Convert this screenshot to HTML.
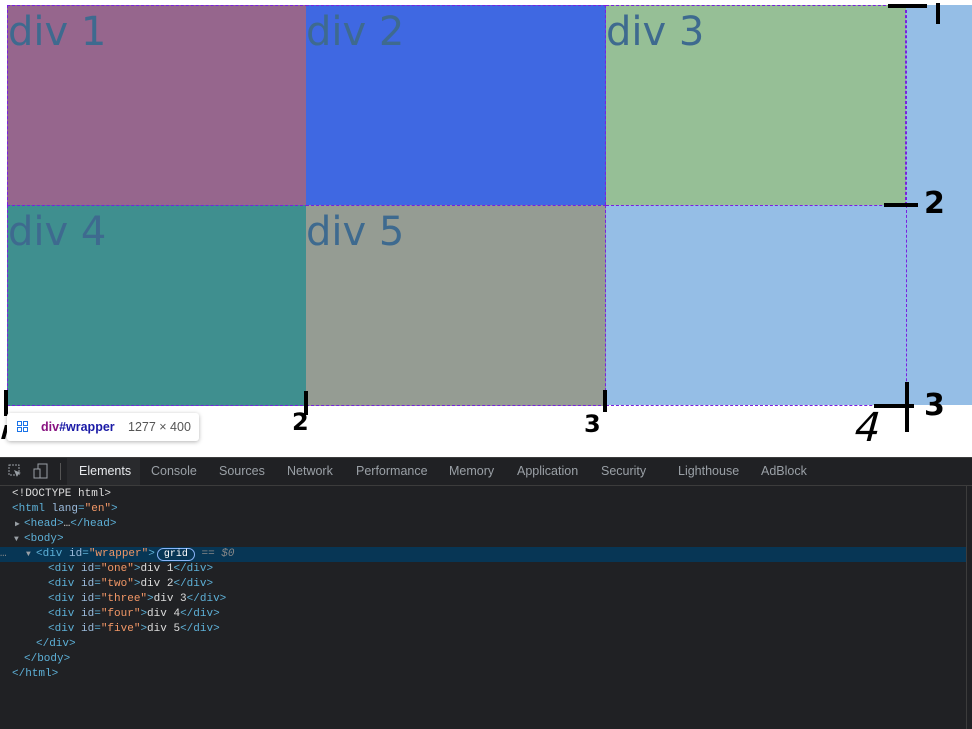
<!DOCTYPE html>
<html><head><style>
body{margin:0;width:972px;height:729px;overflow:hidden;background:#fff;position:relative;font-family:"Liberation Sans",sans-serif}
.wrap{position:absolute;left:7px;top:5px;width:965px;height:400px;background:#95bee6}
.c{position:absolute;width:299px;height:199px;font-family:"DejaVu Sans","Liberation Sans",sans-serif;font-size:40px;color:#3e6a8f;line-height:52px;border-style:dashed;border-color:#7a1fe0;border-width:1px 1px 0 0}
.m{position:absolute;background:#000}
.h{position:absolute;font:bold 30px "DejaVu Sans",sans-serif;color:#000}
.dt{position:absolute;left:0;top:457px;width:972px;height:272px;background:#202124}
.tabs{height:27px;border-bottom:1px solid #3c3c3c;border-top:1px solid #3c3c3c;position:relative;font-size:12.5px;color:#9aa0a6}
.tabs span{position:absolute;top:6px}
.code{font:11px/15px "Liberation Mono",monospace;color:#ddd;position:absolute;top:30px;left:0;width:966px}
.code div{height:15px;white-space:pre;position:relative}
.code div b{position:absolute;top:0;font-weight:normal}
.t{color:#5db0d7}.a{color:#9bbbdc}.v{color:#f29766}.w{color:#ddd}
.ar{color:#9aa0a6;font-size:8px}
</style></head><body>
<div class="wrap"></div>
<div class="c" style="left:7px;top:5px;background:#96668d;border-left:1px dashed #7a1fe0;border-top:1px dashed #7a1fe0">div 1</div>
<div class="c" style="left:306px;top:5px;background:#3f68e2;border-top:1px dashed #7a1fe0">div 2</div>
<div class="c" style="left:606px;top:5px;background:#96bf96;border-top:1px dashed #7a1fe0">div 3</div>
<div class="c" style="left:7px;top:205px;background:#3f8f8f;border-left:1px dashed #7a1fe0;border-bottom:1px dashed #7a1fe0">div 4</div>
<div class="c" style="left:306px;top:205px;background:#959c93;border-bottom:1px dashed #7a1fe0">div 5</div>
<div style="position:absolute;left:606px;top:205px;width:300px;height:199px;border-right:1px dashed #7a1fe0;border-bottom:1px dashed #7a1fe0;border-top:1px dashed #7a1fe0"></div>
<div style="position:absolute;left:906px;top:5px;height:200px;border-right:1px dashed #7a1fe0"></div>
<div class="m" style="left:888px;top:4px;width:39px;height:4px"></div>
<div class="m" style="left:936px;top:3px;width:4px;height:21px"></div>
<div class="m" style="left:884px;top:203px;width:34px;height:4px"></div>
<div class="h" style="left:924px;top:186px">2</div>
<div class="m" style="left:905px;top:382px;width:4px;height:50px"></div>
<div class="m" style="left:874px;top:404px;width:40px;height:4px"></div>
<div class="h" style="left:924px;top:388px">3</div>
<div style="position:absolute;left:855px;top:405px;font:40px 'DejaVu Sans',sans-serif;transform:skewX(-15deg)">4</div>
<div class="m" style="left:4px;top:390px;width:4px;height:26px"></div>
<div class="m" style="left:304px;top:391px;width:4px;height:24px"></div>
<div class="h" style="left:292px;top:408px;font-size:24px">2</div>
<div class="m" style="left:603px;top:390px;width:4px;height:22px"></div>
<div class="h" style="left:584px;top:410px;font-size:24px">3</div>
<div class="m" style="left:3px;top:425px;width:4px;height:14px;transform:skewX(-15deg)"></div>
<div style="position:absolute;left:7px;top:413px;width:192px;height:28px;background:#fff;border-radius:3px;box-shadow:0 1px 4px rgba(0,0,0,.3);font-size:12.5px;line-height:28px">
<svg style="position:absolute;left:10px;top:8px" width="11" height="11"><rect x="0.5" y="0.5" width="4" height="4" fill="none" stroke="#1a73e8"/><rect x="6.5" y="0.5" width="4" height="4" fill="none" stroke="#1a73e8"/><rect x="0.5" y="6.5" width="4" height="4" fill="none" stroke="#1a73e8"/><rect x="6.5" y="6.5" width="4" height="4" fill="none" stroke="#1a73e8"/></svg>
<span style="position:absolute;left:34px;font-weight:bold"><span style="color:#881280">div</span><span style="color:#1a1aa6">#wrapper</span></span>
<span style="position:absolute;left:121px;color:#555">1277 × 400</span></div>
<div class="dt">
<div class="tabs">
<svg style="position:absolute;left:8px;top:6px" width="14" height="14"><rect x="1" y="1" width="10" height="10" fill="none" stroke="#9aa0a6" stroke-dasharray="2 1"/><path d="M6 6l7 3-3 1-1 3z" fill="#9aa0a6"/></svg>
<svg style="position:absolute;left:33px;top:5px" width="16" height="16"><rect x="5" y="1" width="9" height="14" fill="none" stroke="#9aa0a6"/><rect x="1" y="6" width="6" height="9" fill="#202124" stroke="#9aa0a6"/></svg>
<div style="position:absolute;left:60px;top:5px;width:1px;height:17px;background:#555"></div>
<div style="position:absolute;left:67px;top:0;width:73px;height:27px;background:#292a2d"></div>
<span style="left:79px;color:#e8eaed">Elements</span><span style="left:151px">Console</span><span style="left:219px">Sources</span><span style="left:287px">Network</span><span style="left:356px">Performance</span><span style="left:449px">Memory</span><span style="left:517px">Application</span><span style="left:601px">Security</span><span style="left:678px">Lighthouse</span><span style="left:761px">AdBlock</span>
</div>
<div class="code">
<div><b class="w" style="left:12px">&lt;!DOCTYPE html&gt;</b></div>
<div><b class="t" style="left:12px">&lt;html <span class="a">lang</span>=<span class="v">"en"</span>&gt;</b></div>
<div><b class="ar" style="left:15px">▶</b><b class="t" style="left:24px">&lt;head&gt;<span class="w">…</span>&lt;/head&gt;</b></div>
<div><b class="ar" style="left:14px">▼</b><b class="t" style="left:24px">&lt;body&gt;</b></div>
<div style="background:#073655"><b style="left:0;color:#888">…</b><b class="ar" style="left:26px">▼</b><b class="t" style="left:36px">&lt;div <span class="a">id</span>=<span class="v">"wrapper"</span>&gt;<span style="border:1px solid #8ab4f8;border-radius:8px;padding:0 6px;color:#fff;font-size:10px;margin-left:2px">grid</span> <span style="color:#888">== <i>$0</i></span></b></div>
<div><b class="t" style="left:48px">&lt;div <span class="a">id</span>=<span class="v">"one"</span>&gt;<span class="w">div 1</span>&lt;/div&gt;</b></div>
<div><b class="t" style="left:48px">&lt;div <span class="a">id</span>=<span class="v">"two"</span>&gt;<span class="w">div 2</span>&lt;/div&gt;</b></div>
<div><b class="t" style="left:48px">&lt;div <span class="a">id</span>=<span class="v">"three"</span>&gt;<span class="w">div 3</span>&lt;/div&gt;</b></div>
<div><b class="t" style="left:48px">&lt;div <span class="a">id</span>=<span class="v">"four"</span>&gt;<span class="w">div 4</span>&lt;/div&gt;</b></div>
<div><b class="t" style="left:48px">&lt;div <span class="a">id</span>=<span class="v">"five"</span>&gt;<span class="w">div 5</span>&lt;/div&gt;</b></div>
<div><b class="t" style="left:36px">&lt;/div&gt;</b></div>
<div><b class="t" style="left:24px">&lt;/body&gt;</b></div>
<div><b class="t" style="left:12px">&lt;/html&gt;</b></div>
</div>
<div style="position:absolute;left:966px;top:29px;width:1px;height:243px;background:#3c3c3c"></div>
</div>
</body></html>
